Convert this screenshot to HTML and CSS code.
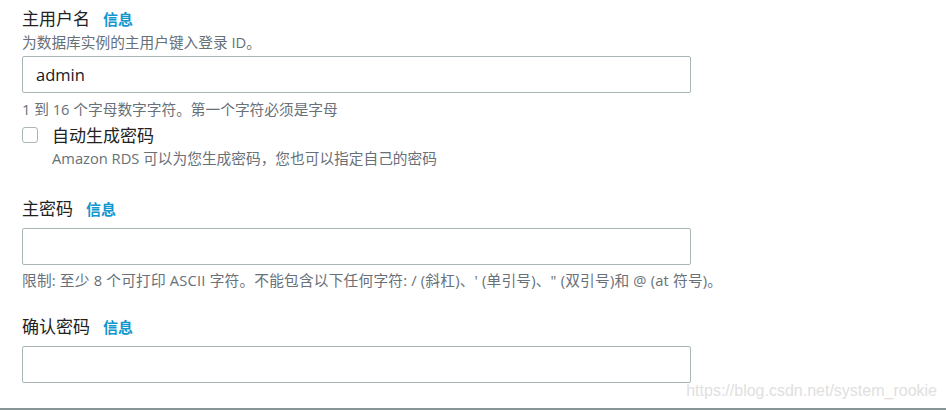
FILE: index.html
```html
<!DOCTYPE html>
<html lang="zh-CN">
<head>
  <meta charset="UTF-8">
  <title>设置</title>
  <link rel="stylesheet" href="styles.css">
</head>
<body>
  <div class="form">
    <div class="field field-first">
      <div class="label">主用户名<a class="info">信息</a></div>
      <div class="desc">为数据库实例的主用户键入登录 ID。</div>
      <input class="text-input" type="text" value="admin">
      <div class="hint">1 到 16 个字母数字字符。第一个字符必须是字母</div>
      <label class="check">
        <span class="box"></span>
        <span class="check-text">
          <span class="check-label">自动生成密码</span>
          <span class="check-desc">Amazon RDS 可以为您生成密码，您也可以指定自己的密码</span>
        </span>
      </label>
    </div>

    <div class="field">
      <div class="label">主密码<a class="info">信息</a></div>
      <input class="text-input" type="password">
      <div class="hint hint-wide">限制: 至少 8 个可打印 ASCII 字符。不能包含以下任何字符: / (斜杠)、' (单引号)、" (双引号)和 @ (at 符号)。</div>
    </div>

    <div class="field field-last">
      <div class="label">确认密码<a class="info">信息</a></div>
      <input class="text-input" type="password">
    </div>
  </div>
  <div class="watermark">https://blog.csdn.net/system_rookie</div>
</body>
</html>
```

FILE: styles.css
```css
/* AWS style form fields */
body {
  margin: 0;
  height: 410px;
  font-family: "Open Sans", "Noto Sans CJK SC", sans-serif;
  color: #16191f;
  background-color: #ffffff;
  border-bottom: 2px solid #879596;
  box-sizing: border-box;
  position: relative;
  overflow: hidden;
}
.form {
  padding: 6px 22px 0 22px;
  width: 669px;
}
.field {
  margin-top: 27px;
}
.field-first {
  margin-top: 0;
}
.field-last {
  margin-top: 23px;
}
.label {
  font-family: "Noto Sans CJK SC", sans-serif;
  font-size: 17px;
  line-height: 24px;
  color: #222222;
}
.info {
  font-size: 15px;
  font-weight: bold;
  color: #0f97cf;
  margin-left: 13px;
}
.desc, .hint, .check-desc {
  font-family: "Open Sans", "Noto Sans CJK SC", sans-serif;
  font-size: 14.7px;
  line-height: 22px;
  color: #687078;
  white-space: nowrap;
}
.hint-wide {
  letter-spacing: 0.2px;
}
.text-input {
  display: block;
  box-sizing: border-box;
  width: 669px;
  height: 37px;
  margin: 3px 0 5px 0;
  padding: 0 13px;
  border: 1px solid #aab7b8;
  border-radius: 2px;
  font-family: "Open Sans", sans-serif;
  font-size: 16.5px;
  color: #16191f;
  outline: none;
}
.label + .text-input {
  margin-top: 7px;
  margin-bottom: 4px;
}
.check {
  display: flex;
  align-items: flex-start;
  gap: 14px;
  margin-top: 3px;
}
.box {
  width: 16px;
  height: 16px;
  box-sizing: border-box;
  border: 1px solid #aab7b8;
  border-radius: 3px;
  margin-top: 4px;
  flex-shrink: 0;
}
.check-text {
  display: flex;
  flex-direction: column;
}
.check-label {
  font-family: "Noto Sans CJK SC", sans-serif;
  font-size: 17px;
  line-height: 24px;
  color: #222222;
}
.watermark {
  position: absolute;
  right: 9px;
  bottom: 8px;
  font-family: "Liberation Sans", sans-serif;
  font-size: 16px;
  color: #e0e0e0;
}
```
